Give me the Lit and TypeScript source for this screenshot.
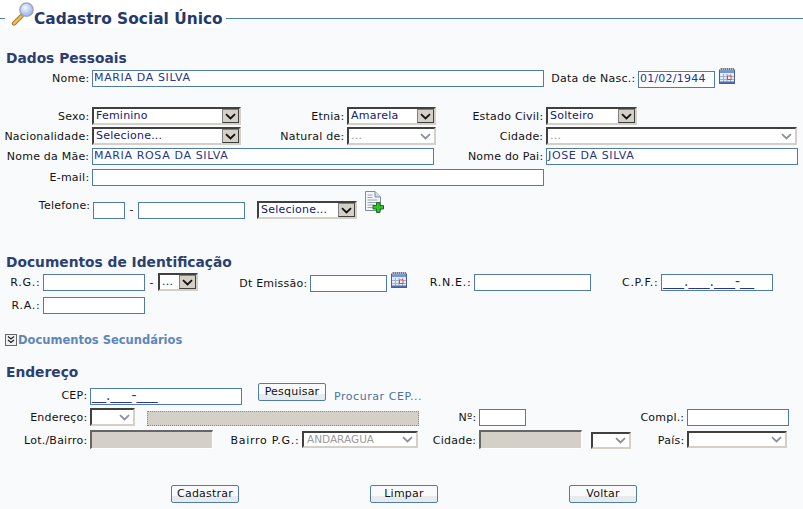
import { LitElement, html, css, svg } from "lit";
import { customElement } from "lit/decorators.js";

const chevron = svg`<svg class="chev" width="11" height="7" viewBox="0 0 11 7"><path d="M1 1.2 5.5 5.4 10 1.2" fill="none" stroke="currentColor" stroke-width="1.8"/></svg>`;

const calendar = html`<svg class="cal" width="16" height="16" viewBox="0 0 16 16">
  <rect x="0.5" y="2" width="15" height="13.5" fill="#e6ecf8" stroke="#4a5f95"/>
  <rect x="1" y="0" width="14" height="2" fill="#777"/>
  <path d="M1 1h1M3 1h1M5 1h1M7 1h1M9 1h1M11 1h1M13 1h1" stroke="#fff"/>
  <rect x="1" y="2.5" width="14" height="2.5" fill="#6f94e0"/>
  <path d="M1 8.5h14M1 11.5h14M4.5 6v9M8 6v9M11.5 6v9" stroke="#9db0d6"/>
  <rect x="1" y="13.5" width="14" height="1.5" fill="#4f6ea8"/>
  <rect x="8.5" y="8" width="3.5" height="3.5" fill="#fff" stroke="#e2452a"/>
</svg>`;

const magnifier = html`<svg class="lens" width="23" height="24" viewBox="0 0 23 24">
  <defs>
    <radialGradient id="glass" cx="0.4" cy="0.35" r="0.7">
      <stop offset="0" stop-color="#f4f8ff"/>
      <stop offset="1" stop-color="#8fb0ea"/>
    </radialGradient>
  </defs>
  <path d="M3 21.5 11 13.5" stroke="#a8772a" stroke-width="4.4" stroke-linecap="round"/>
  <path d="M3 21.5 11 13.5" stroke="#f3bf4e" stroke-width="2.4" stroke-linecap="round"/>
  <path d="M10.5 14 13 11.5" stroke="#9a9aa5" stroke-width="3"/>
  <circle cx="15.5" cy="7.7" r="6.6" fill="url(#glass)" stroke="#a4a8bd" stroke-width="1.5"/>
</svg>`;

const docAdd = html`<svg class="doc" width="19" height="24" viewBox="0 0 19 24">
  <path d="M0.5 0.5H10L15.5 6V19.5H0.5Z" fill="#f4f6fa" stroke="#7d8aa3"/>
  <path d="M10 0.5V6H15.5" fill="#d4dbe8" stroke="#7d8aa3"/>
  <path d="M2.5 4h5M2.5 6.5h5M2.5 9h10M2.5 11.5h10M2.5 14h7M2.5 16.5h5" stroke="#9aa3b3"/>
  <path d="M11.5 11.5h3.5v3h3.5v3.5h-3.5v3.5h-3.5v-3.5H8V14.5h3.5Z" fill="#35c02a" stroke="#17701a"/>
</svg>`;

const expand = html`<svg class="toggle" width="12" height="12" viewBox="0 0 12 12">
  <rect x="0.5" y="0.5" width="11" height="11" fill="#eef0f4" stroke="#666"/>
  <path d="M3 2.5 6 5 9 2.5M3 6 6 8.5 9 6" fill="none" stroke="#222" stroke-width="1.2"/>
</svg>`;

@customElement("app-root")
export class AppRoot extends LitElement {
  static styles = css`
    :host {
      display: block;
      min-height: 509px;
      overflow: hidden;
      background: #f9fafc;
      color: #111;
      font: 11px/17px "DejaVu Sans", Verdana, sans-serif;
      letter-spacing: 0.22px;
    }

    .head {
      display: flex;
      height: 28px;
    }
    .rule {
      height: 18px;
      background: #fff;
      border-bottom: 1px solid #4f7cac;
    }
    .rule.left {
      width: 5px;
    }
    .rule.right {
      flex: 1;
    }
    .title {
      display: flex;
      flex: none;
      width: 221px;
      height: 28px;
      background: #fff;
    }
    .lens {
      flex: none;
      margin: 2px 0 0 6px;
    }
    h1 {
      margin: 8px 0 0;
      font-size: 15.4px;
      line-height: 22px;
      letter-spacing: 0;
      color: #24396d;
      white-space: nowrap;
    }

    h2 {
      margin: 0;
      padding-left: 6px;
      font-size: 13.8px;
      line-height: 18px;
      letter-spacing: 0;
      color: #2c3f72;
    }
    .h-pessoais {
      margin-top: 21px;
    }
    .h-docs {
      margin-top: 34px;
      margin-bottom: 1px;
    }
    .h-end {
      margin-top: 16px;
    }

    .row {
      display: flex;
      align-items: flex-start;
    }
    .r1 {
      margin-top: 1px;
    }
    .r2 {
      margin-top: 2px;
    }
    .r3 {
      margin-top: 3px;
    }
    .r4 {
      margin-top: 4px;
    }
    .r5 {
      margin-top: 5px;
    }
    .r18 {
      margin-top: 18px;
    }
    .r36 {
      margin-top: 36px;
    }

    /* vertical nudges inside a row */
    .o1 {
      margin-top: 1px;
    }
    .o2 {
      margin-top: 2px;
    }
    .o3 {
      margin-top: 3px;
    }
    .o4 {
      margin-top: 4px;
    }
    .o5 {
      margin-top: 5px;
    }
    .o6 {
      margin-top: 6px;
    }
    .o10 {
      margin-top: 10px;
    }
    .o11 {
      margin-top: 11px;
    }

    .lb {
      flex: none;
      box-sizing: border-box;
      padding-right: 2.7px;
      text-align: right;
      white-space: nowrap;
    }
    .lb.abbr {
      letter-spacing: 0.7px;
    }
    .dash {
      flex: none;
      width: 13px;
      text-align: center;
    }

    .in {
      flex: none;
      box-sizing: border-box;
      height: 17px;
      padding-left: 1px;
      border: 1px solid #4f7cac;
      background: #fff;
      color: #27358a;
      line-height: 14px;
      white-space: nowrap;
      overflow: hidden;
    }
    .in.caps {
      letter-spacing: 0.64px;
    }
    .in.mask {
      font-size: 14px;
      letter-spacing: 0;
      line-height: 13px;
    }
    .off {
      flex: none;
      box-sizing: border-box;
      height: 19px;
      background: #d4d0c8;
      border-top: 2px solid #666;
      border-left: 2px solid #666;
      border-right: 1px solid #fff;
      border-bottom: 1px solid #fff;
    }
    .off.dotted {
      height: 15px;
      border: 1px dotted #8a8a8a;
    }

    .sel {
      flex: none;
      box-sizing: border-box;
      display: flex;
      justify-content: space-between;
      height: 18px;
      padding-left: 2px;
      border-style: solid;
      border-width: 2px;
      border-color: #404040 #d4d0c8 #d4d0c8 #404040;
      background: #fff;
      color: #15206b;
      line-height: 14px;
      white-space: nowrap;
    }
    .sel.short {
      height: 17px;
      line-height: 12px;
    }
    .sel .arrow {
      flex: none;
      display: flex;
      align-items: center;
      justify-content: center;
      box-sizing: border-box;
      width: 17px;
      height: 14px;
      border: 1px solid #404040;
      border-top-color: #808080;
      border-left-color: #808080;
      background: #d4d0c8;
      color: #111;
    }
    .sel.short .arrow {
      height: 13px;
    }
    .sel.dis {
      color: #9a9a9a;
    }
    .sel.short.dis {
      padding-left: 3px;
      font-size: 10.5px;
      letter-spacing: 0;
    }
    .sel.dis .arrow {
      border: none;
      background: transparent;
      color: #8a8f9a;
    }

    .cal {
      flex: none;
    }
    .doc {
      flex: none;
      margin-left: 8px;
    }
    .ml4 {
      margin-left: 4px;
    }
    .ml8 {
      margin-left: 8px;
    }
    .ml9 {
      margin-left: 9px;
    }
    .ml12 {
      margin-left: 12px;
    }
    .ml16 {
      margin-left: 16px;
    }

    .toggle-row {
      display: flex;
      align-items: center;
      height: 14px;
      margin-top: 19px;
      padding-left: 5px;
      color: #5d87b8;
      font-size: 11.5px;
      font-weight: bold;
      letter-spacing: 0;
      white-space: nowrap;
    }
    .toggle {
      flex: none;
      margin-right: 1px;
    }

    .btn {
      flex: none;
      box-sizing: border-box;
      width: 68px;
      height: 18px;
      border: 1px solid #4f7cac;
      border-radius: 2px;
      background: linear-gradient(#f9fafc 60%, #e7ebee 60%);
      text-align: center;
      line-height: 16px;
    }
    .link {
      color: #4a739c;
      letter-spacing: 0.55px;
      white-space: nowrap;
    }
    .actions {
      gap: 131px;
      padding-left: 171px;
    }

    /* label boxes, measured from the end of the previous control */
    .w32 { width: 32px; }
    .w40 { width: 40px; }
    .w43 { width: 43px; }
    .w45 { width: 45px; }
    .w47 { width: 47px; }
    .w56 { width: 56px; }
    .w60 { width: 60px; }
    .w61 { width: 61px; }
    .w67 { width: 67px; }
    .w70 { width: 70px; }
    .w77 { width: 77px; }
    .w89 { width: 89px; }
    .w90 { width: 90px; }
    .w91 { width: 91px; }
    .w92 { width: 92px; }
    .w93 { width: 93px; }
    .w94 { width: 94px; }
    .w100 { width: 100px; }
    .w102 { width: 102px; }
    .w103 { width: 103px; }
    .w106 { width: 106px; }
    .w107 { width: 107px; }
    .w110 { width: 110px; }
    .w112 { width: 112px; }
    .w116 { width: 116px; }
    .w117 { width: 117px; }
    .w123 { width: 123px; }
    .w149 { width: 149px; }
    .w152 { width: 152px; }
    .w161 { width: 161px; }
    .w251 { width: 251px; }
    .w252 { width: 252px; }
    .w272 { width: 272px; }
    .w342 { width: 342px; }
    .w452 { width: 452px; }
  `;

  // cls carries the width and any nudge
  private sel(cls: string, text = "", disabled = false) {
    const arrow = html`<span class="arrow">${chevron}</span>`;
    return html`<div class="sel ${disabled ? "dis" : ""} ${cls}">
      <span>${text}</span>${arrow}
    </div>`;
  }

  render() {
    return html`
      <div class="head">
        <div class="rule left"></div>
        <div class="title">${magnifier}<h1>Cadastro Social Único</h1></div>
        <div class="rule right"></div>
      </div>

      <h2 class="h-pessoais">Dados Pessoais</h2>
      <div class="row r1">
        <div class="lb w92 o2">Nome:</div>
        <div class="in caps w452 o2">MARIA DA SILVA</div>
        <div class="lb w94 o2">Data de Nasc.:</div>
        <div class="in w77 o3">01/02/1944</div>
        <span class="ml4">${calendar}</span>
      </div>
      <div class="row r18">
        <div class="lb w92 o1">Sexo:</div>
        ${this.sel("w149", "Feminino")}
        <div class="lb w106 o1">Etnia:</div>
        ${this.sel("w89", "Amarela")}
        <div class="lb w110 o1">Estado Civil:</div>
        ${this.sel("w91", "Solteiro")}
      </div>
      <div class="row r2">
        <div class="lb w92 o1">Nacionalidade:</div>
        ${this.sel("w149", "Selecione...")}
        <div class="lb w106 o1">Natural de:</div>
        ${this.sel("w89", "...", true)}
        <div class="lb w110 o1">Cidade:</div>
        ${this.sel("w251", "...", true)}
      </div>
      <div class="row r3">
        <div class="lb w92">Nome da Mãe:</div>
        <div class="in caps w342">MARIA ROSA DA SILVA</div>
        <div class="lb w112">Nome do Pai:</div>
        <div class="in caps w252">JOSE DA SILVA</div>
      </div>
      <div class="row r4">
        <div class="lb w92">E-mail:</div>
        <div class="in w452"></div>
      </div>
      <div class="row r5">
        <div class="lb w93 o6">Telefone:</div>
        <div class="in w32 o11"></div>
        <div class="dash o10">-</div>
        <div class="in w107 o11"></div>
        ${this.sel("w100 ml12 o10", "Selecione...")}
        ${docAdd}
      </div>

      <h2 class="h-docs">Documentos de Identificação</h2>
      <div class="row">
        <div class="lb abbr w43 o2">R.G.:</div>
        <div class="in w102 o2"></div>
        <div class="dash o2">-</div>
        ${this.sel("w40 o1", "...")}
        <div class="lb w112 o3">Dt Emissão:</div>
        <div class="in w77 o3"></div>
        <span class="ml4">${calendar}</span>
        <div class="lb abbr w67 o2">R.N.E.:</div>
        <div class="in w117 o2"></div>
        <div class="lb abbr w70 o2">C.P.F.:</div>
        <div class="in mask w112 o2">___.___.___-__</div>
      </div>
      <div class="row r4">
        <div class="lb abbr w43">R.A.:</div>
        <div class="in w102"></div>
      </div>

      <div class="toggle-row">${expand}Documentos Secundários</div>

      <h2 class="h-end">Endereço</h2>
      <div class="row r2">
        <div class="lb w90 o4">CEP:</div>
        <div class="in mask w152 o5">__.___-___</div>
        <div class="btn ml16">Pesquisar</div>
        <div class="link ml8 o5">Procurar CEP...</div>
      </div>
      <div class="row r3">
        <div class="lb w90 o1">Endereço:</div>
        ${this.sel("w45", "", true)}
        <div class="off dotted w272 ml12 o3"></div>
        <div class="lb w60 o1">Nº:</div>
        <div class="in w47 o1"></div>
        <div class="lb w161 o1">Compl.:</div>
        <div class="in w102 o1"></div>
      </div>
      <div class="row r4">
        <div class="lb w90 o2">Lot./Bairro:</div>
        <div class="off w123"></div>
        <div class="lb abbr w89 o2">Bairro P.G.:</div>
        ${this.sel("short w116 o1", "ANDARAGUA", true)}
        <div class="lb w61 o2">Cidade:</div>
        <div class="off w103"></div>
        ${this.sel("short w40 ml9 o2", "", true)}
        <div class="lb w56 o2">País:</div>
        ${this.sel("short w100 o1", "", true)}
      </div>

      <div class="row actions r36">
        <div class="btn">Cadastrar</div>
        <div class="btn">Limpar</div>
        <div class="btn">Voltar</div>
      </div>
    `;
  }
}
